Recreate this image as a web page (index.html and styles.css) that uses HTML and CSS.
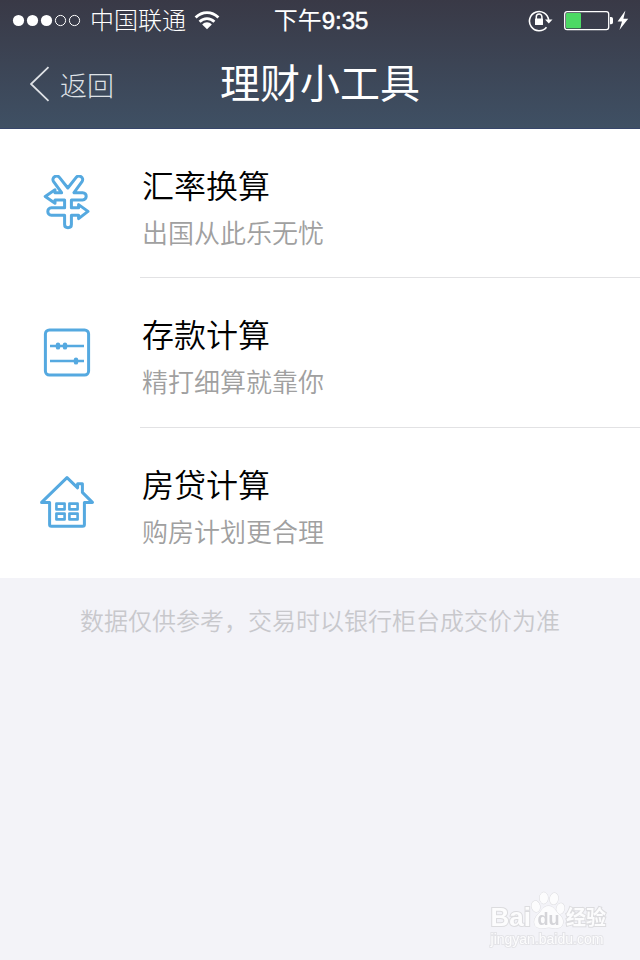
FILE: index.html
```html
<!DOCTYPE html>
<html lang="zh-CN">
<head>
  <meta charset="UTF-8" />
  <meta name="viewport" content="width=device-width, initial-scale=1.0"/>
  <title>理财小工具</title>
  <link rel="stylesheet" href="styles.css">
</head>
<body>
  <header class="header">
    <div class="status-bar">
      <div class="status-left">
        <svg class="signal" width="70" height="14" viewBox="0 0 70 14" aria-hidden="true">
          <g fill="#fff">
            <circle cx="6.5" cy="6.5" r="5.6"/>
            <circle cx="20.5" cy="6.5" r="5.6"/>
            <circle cx="34.5" cy="6.5" r="5.6"/>
          </g>
          <g fill="none" stroke="#fff">
            <circle cx="48.5" cy="6.5" r="5.1"/>
            <circle cx="62.5" cy="6.5" r="5.1"/>
          </g>
        </svg>
        <span class="carrier">中国联通</span>
        <svg class="wifi" width="26" height="20" viewBox="0 0 26 20" aria-hidden="true">
          <g fill="none" stroke="#fff" stroke-width="2.8">
            <path d="M1.6 6.6C8.2 0 17.8 0 24.4 6.6"/>
            <path d="M5.6 10.8C9.8 6.6 16.2 6.6 20.4 10.8"/>
          </g>
          <path d="M8.2 13.6C11 10.6 15 10.6 17.8 13.6L13 18.2Z" fill="#fff"/>
        </svg>
      </div>
      <time class="clock">下午<span class="digits">9:35</span></time>
      <div class="status-right">
        <svg width="26" height="24" viewBox="0 0 26 24" aria-hidden="true">
          <path d="M18.5 18.2A9.6 9.6 0 1 1 20.6 11" fill="none" stroke="#fff" stroke-width="1.6"/>
          <path d="M17 10.5H24.5L20.8 14.6Z" fill="#fff"/>
          <path d="M8.3 10V7.8a2.8 2.8 0 0 1 5.6 0V10" fill="none" stroke="#fff" stroke-width="1.5"/>
          <rect x="7" y="9.5" width="8" height="6.5" rx="0.6" fill="#fff"/>
        </svg>
        <svg width="66" height="22" viewBox="0 0 66 22" aria-hidden="true">
          <rect x="0.7" y="1.6" width="44" height="18" rx="2.4" fill="none" stroke="#fff" stroke-width="1.3"/>
          <rect x="2" y="2.9" width="15" height="15.4" rx="1" fill="#4cd964"/>
          <path d="M46 7h1.2a1.8 1.8 0 0 1 1.8 1.8v3.6a1.8 1.8 0 0 1-1.8 1.8H46Z" fill="#fff"/>
          <path d="M61.4 0.6L53.6 11.4h4.4L55.4 20L64.2 8.8H59.4Z" fill="#fff"/>
        </svg>
      </div>
    </div>

    <nav class="nav-bar">
      <a class="back" href="#">
        <svg width="20" height="36" viewBox="0 0 20 36" aria-hidden="true">
          <path d="M18.5 1.2L1 18L18.5 34.8" fill="none" stroke="#dfe2e6" stroke-width="1.8"/>
        </svg>
        <span>返回</span>
      </a>
      <h1>理财小工具</h1>
    </nav>
  </header>

  <main>
    <ul class="tools">
      <li>
        <a class="tool" href="#">
          <svg class="tool-icon" viewBox="0 0 56 56" aria-hidden="true">
            <path d="M6.2 21.4L16 14.8V17.7H22.6L14.6 6.6C12 2.8 17.6 -1.2 20.6 2.6L28.8 13L37 2.6C40 -1.2 45.6 2.8 43 6.6L35 17.7H43.6C48.4 17.7 48.4 25 43.6 25H32.4V32.8H39.6V29.6L49 36.4L39.6 43.6V40.2H32.4V49.6C32.4 53.8 25.6 53.8 25.6 49.6V40.2H12.4C7.6 40.2 7.6 32.8 12.4 32.8H25.6V25H16V28.2Z"/>
          </svg>
          <div class="tool-text">
            <h2>汇率换算</h2>
            <p>出国从此乐无忧</p>
          </div>
        </a>
      </li>
      <li>
        <a class="tool" href="#">
          <svg class="tool-icon" viewBox="0 0 56 56" aria-hidden="true">
            <rect x="6.4" y="6" width="43.2" height="45" rx="4"/>
            <path class="track" d="M11 22H45M11 37H45"/>
            <path class="knob" d="M19 20.6V23.4M26 20.6V23.4M37 35.6V38.4"/>
          </svg>
          <div class="tool-text">
            <h2>存款计算</h2>
            <p>精打细算就靠你</p>
          </div>
        </a>
      </li>
      <li>
        <a class="tool" href="#">
          <svg class="tool-icon" viewBox="0 0 56 56" aria-hidden="true">
            <path d="M2.6 28.4L28 3.6L38.6 13.8V9.8H43.4V18.4L53.4 28.4H45.4V50.4Q45.4 52.2 43.6 52.2H12.4Q10.6 52.2 10.6 50.4V28.4Z"/>
            <path class="panes" d="M17.4 29.6H25.6V35.4H17.4ZM30.4 29.6H38.6V35.4H30.4ZM17.4 39.6H25.6V45.4H17.4ZM30.4 39.6H38.6V45.4H30.4Z"/>
          </svg>
          <div class="tool-text">
            <h2>房贷计算</h2>
            <p>购房计划更合理</p>
          </div>
        </a>
      </li>
    </ul>
    <p class="note">数据仅供参考，交易时以银行柜台成交价为准</p>
  </main>

  <div class="watermark">
    <div class="watermark-logo">
      <span class="watermark-bai">Bai</span>
      <svg class="paw" width="35" height="38" viewBox="0 0 35 38" role="img" aria-label="du">
        <g fill="#fcfcfd" stroke="#dcdcdf">
          <ellipse cx="4.8" cy="15.4" rx="4.2" ry="5.6" transform="rotate(-12 4.8 15.4)"/>
          <ellipse cx="12.8" cy="7" rx="4.2" ry="5.8"/>
          <ellipse cx="23" cy="7.8" rx="4.2" ry="5.8" transform="rotate(10 23 7.8)"/>
          <ellipse cx="29.4" cy="17.6" rx="4" ry="5.4" transform="rotate(12 29.4 17.6)"/>
          <path d="M17.4 15C22.6 15 24 19.4 27.4 22.4C31 25.6 33 29.4 31.6 33.4C30 38 24.6 37.4 17.8 36.6C11 37.4 5 38 3.6 33.2C2.4 29 4.6 25.4 8 22.2C11.2 19.2 12.4 15 17.4 15Z"/>
        </g>
        <text class="paw-text" x="17.6" y="34" text-anchor="middle">du</text>
      </svg>
      <span class="watermark-cn">经验</span>
    </div>
    <div class="watermark-url">jingyan.baidu.com</div>
  </div>
</body>
</html>
```

FILE: styles.css
```css
:root {
  --blue: #55a9e0;
  --page: #f3f3f8;
  --line: #e2e2e4;
  --muted: #a0a0a0;
}

* {
  box-sizing: border-box;
}

body {
  margin: 0;
  min-height: 100vh;
  background-color: var(--page);
  color: #000;
  font-family: "Liberation Sans", "Noto Sans CJK SC", sans-serif;
}

h1, h2, p, ul {
  margin: 0;
  padding: 0;
  font-weight: 400;
}

a {
  color: inherit;
  text-decoration: none;
}

svg {
  flex: none;
}

.header {
  background: linear-gradient(#393946, #3f5064);
  border-bottom: 1px solid #36456a;
  color: white;
}

.status-bar {
  display: grid;
  grid-template-columns: 1fr auto 1fr;
  align-items: center;
  height: 42px;
  padding: 0 10px 0 12px;
  font-size: 24px;
  line-height: 36px;
}

.status-left, .status-right {
  display: flex;
  align-items: center;
}

.status-left {
  gap: 8px;
}

.status-right {
  justify-content: flex-end;
  gap: 10px;
}

.carrier {
  font-weight: 300;
}

.digits {
  -webkit-text-stroke: 0.5px white;
}

.nav-bar {
  display: grid;
  grid-template-columns: 1fr auto 1fr;
  align-items: center;
  height: 86px;
  padding: 0 30px 2px;
}

.back {
  display: flex;
  align-items: center;
  gap: 10px;
  color: #dfe2e6;
  font-size: 27px;
  font-weight: 300;
}

.nav-bar h1 {
  padding-bottom: 6px;
  font-size: 40px;
}

.tools {
  background: white;
  list-style: none;
}

.tool {
  display: flex;
  align-items: flex-start;
  gap: 45px;
  padding-left: 39px;
}

.tool-icon {
  width: 56px;
  height: 56px;
  margin-top: 46px;
  fill: none;
  stroke: var(--blue);
  stroke-width: 3;
  stroke-linejoin: round;
}

.track {
  stroke-width: 2.4;
}

.knob {
  stroke-width: 4.4;
  stroke-linecap: round;
}

.panes {
  stroke-width: 2.6;
}

.tool-text {
  flex: 1;
  height: 149px;
  padding: 34px 0 0 2px;
  border-bottom: 1px solid var(--line);
}

.tools li + li .tool-text {
  height: 150px;
}

.tools li:last-child .tool-text {
  border-bottom: none;
}

.tool-text h2 {
  font-size: 32px;
  font-weight: 350;
  line-height: 48px;
}

.tool-text p {
  color: var(--muted);
  font-size: 26px;
  font-weight: 350;
  line-height: 46px;
}

.note {
  padding: 26px 20px;
  color: #c8c8cc;
  font-size: 24px;
  font-weight: 350;
  line-height: 36px;
  text-align: center;
}

.watermark {
  position: fixed;
  right: 34px;
  bottom: 14px;
  color: #fcfcfd;
  -webkit-text-stroke: 2px #dcdcdf;
  paint-order: stroke fill;
}

.watermark-logo {
  display: flex;
  align-items: flex-end;
  font-weight: 700;
}

.watermark-bai {
  font-size: 26px;
  line-height: 30px;
}

.paw {
  margin-bottom: 3px;
}

.watermark-cn {
  font-size: 20px;
  line-height: 28px;
}

.paw-text {
  fill: #d4d4d8;
  stroke: none;
  -webkit-text-stroke: 0;
  font-size: 18px;
}

.watermark-url {
  font-size: 14px;
  line-height: 14px;
  -webkit-text-stroke: 2px #e4e4e8;
}
```
